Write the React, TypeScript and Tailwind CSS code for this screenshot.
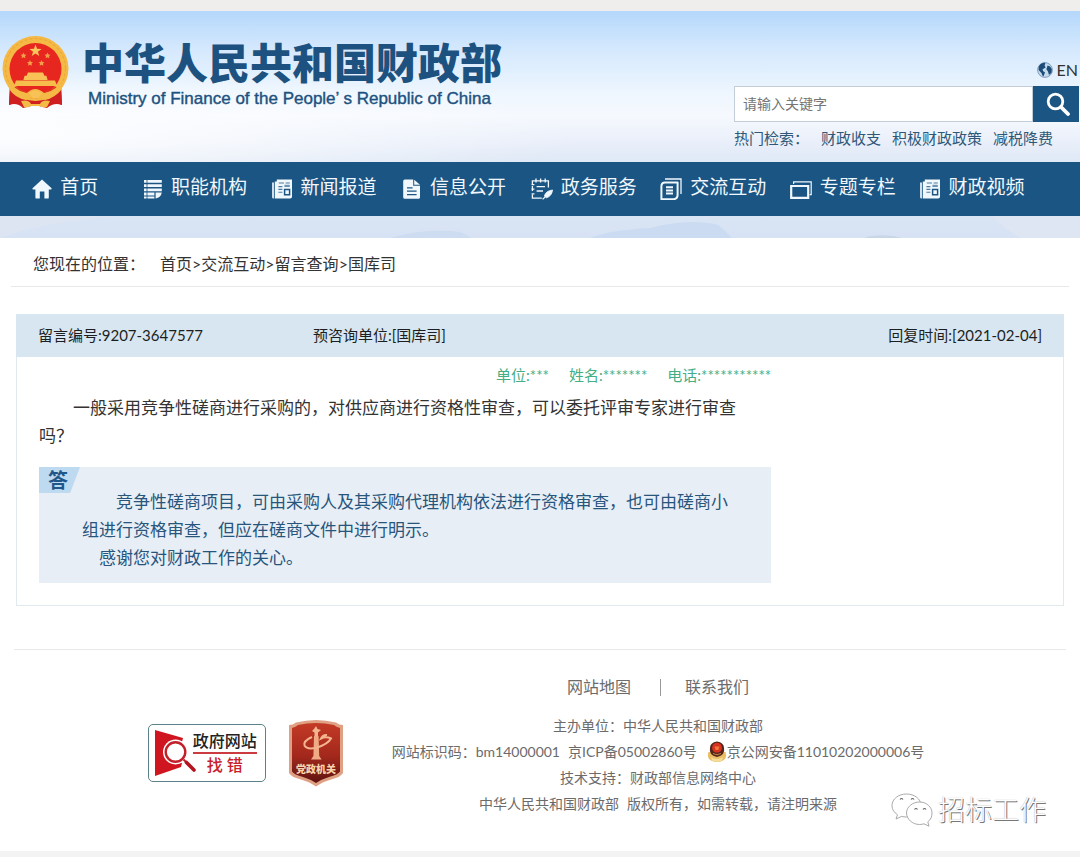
import React from "react";

const HomeIcon = () => (
  <svg viewBox="0 0 20 20" className="w-5 h-5 shrink-0" fill="currentColor" aria-hidden="true">
    <path d="M10 0.5 L19.6 9.3 Q20 10.6 18.6 10.6 L16.8 10.6 L16.8 18.4 Q16.8 19.6 15.6 19.6 L12.4 19.6 L12.4 12.6 L7.8 12.6 L7.8 19.6 L4.6 19.6 Q3.4 19.6 3.4 18.4 L3.4 10.6 L1.4 10.6 Q0 10.6 0.5 9.3 Z" />
  </svg>
);

const ListIcon = () => (
  <svg viewBox="0 0 20 20" className="w-5 h-5 shrink-0" fill="currentColor" aria-hidden="true">
    <path d="M1 1h2.6v2.8H1zM1 5.2h2.6V8H1zM1 9.400h2.600v2.800H1zM1 13.600h2.600v2.800H1zM1 17.600h2.600v2H1z" />
    <path d="M4.400 1H18.800v2.800H4.400zM4.400 5.200H18.800V8H4.400zM4.400 9.400H18.800v2.800H4.400zM4.400 13.600h7v2.800h-7zM4.400 17.600h7v2h-7z" />
    <path d="M12.600 13.400h6.200q-.8 4.800-6.200 6.200z" />
  </svg>
);

const NewsIcon = () => (
  <svg viewBox="0 0 20 20" className="w-5 h-5 shrink-0" aria-hidden="true">
    <path d="M0 3.4h2v16.200H1.600q-1.600 0-1.600-1.600z" fill="currentColor" opacity="0.85" />
    <path d="M2.8 2.6h2V0.6H20v17.2q0 1.8-1.8 1.8H2.8z" fill="currentColor" />
    <path
      d="M6.800 4h5.200M13.600 4h4.200M6.400 7.600h4M6.400 10.400h4M6.400 13.200h4"
      stroke="#4c7a9f"
      strokeWidth="1.1"
    />
    <path d="M12.6 10.4h5v5.400h-5z" fill="none" stroke="#1b5583" strokeWidth="1.5" />
    <path d="M12.4 5.800h5.400v2.200h-5.400z" fill="#6d93b3" />
  </svg>
);

const FileIcon = () => (
  <svg viewBox="0 0 20 20" className="w-5 h-5 shrink-0" aria-hidden="true">
    <path
      d="M2.8 0.6h8.4v6.2H18v11.4q0 1.6-1.6 1.6H2.8q-1.6 0-1.6-1.6V2.2q0-1.6 1.6-1.6z"
      fill="currentColor"
    />
    <path d="M12.2 0.8 L18 5.8 H12.200z" fill="currentColor" />
    <path d="M5 8.8h5.6M5 12.2h9.6M5 15.6h9.6" stroke="#1b5583" strokeWidth="1.2" />
  </svg>
);

const NoteIcon = () => (
  <svg
    viewBox="0 0 22 22"
    className="w-[22px] h-[22px] shrink-0"
    fill="none"
    stroke="currentColor"
    strokeWidth="1.3"
    aria-hidden="true"
  >
    <path d="M17.400 9.600V2.800H1.400v3.600M1.400 16.400v3.800h9.400M1.400 8v5" />
    <path d="M0.600 6.600h2.800M0.600 11.200h2.800M0.600 15.800h2.800" />
    <path d="M5 0.600v4M9.600 0.600v4M14.200 0.600v4M5.600 8.600h8.400M5.600 13h6.400" />
    <path d="M21.600 12q-7 .8-8.200 6l2 1.800q5.200-1.400 6.200-7.800z" fill="currentColor" strokeWidth="0.8" />
    <path d="M16 17l-4.400 4.400" />
  </svg>
);

const PagesIcon = () => (
  <svg
    viewBox="0 0 22 22"
    className="w-[22px] h-[22px] shrink-0"
    fill="none"
    stroke="currentColor"
    aria-hidden="true"
  >
    <path d="M5 1h16v15" strokeWidth="1.3" />
    <path
      d="M5 4.400h12.600v12.400q0 4.400-4.400 4.400H1.400V8.400q0-4 3.600-4z"
      strokeWidth="2"
      strokeLinejoin="round"
    />
    <path d="M6 9.200h7M6 12.400h7M6 15.600h7" strokeWidth="2" />
  </svg>
);

const WindowsIcon = () => (
  <svg
    viewBox="0 0 22 22"
    className="w-[22px] h-[22px] shrink-0"
    fill="none"
    stroke="currentColor"
    aria-hidden="true"
  >
    <path d="M3.600 6V3.800h17.600v12.800h-1.600" strokeWidth="1.2" />
    <path d="M1.200 8h17v11.800h-17z" strokeWidth="2.200" />
  </svg>
);

const Emblem = () => (
  <svg viewBox="0 0 68 74" className="w-[68px] h-[74px] shrink-0" role="img" aria-label="国徽">
    <path d="M9 48 L8 70 Q16 67 22 73 L34 70 L46 73 Q53 67 61 70 L60 48z" fill="#cf1f20" />
    <ellipse cx="34.500" cy="33.500" rx="33" ry="32.500" fill="#f5b945" />
    <ellipse cx="34.500" cy="33.500" rx="30" ry="30" fill="none" stroke="#eda93a" strokeWidth="1.200" strokeDasharray="3 2" />
    <path d="M9 53q4 5 12 8l-2 8q-5-2-11 1zM60 53q-4 5-12 8l2 8q5-2 11 1z" fill="#cf1f20" />
    <circle cx="34.500" cy="34" r="26" fill="#e6261f" />
    <path
      d="M34.5 9.4l1.5 4.4 4.6.1-3.7 2.8 1.4 4.4-3.8-2.6-3.8 2.6 1.4-4.4-3.7-2.8 4.6-.1z"
      fill="#fbc75c"
    />
    <g fill="#f4a04a">
      <path d="M22.500 17.500l.9 2 2.100.2-1.500 1.400.4 2.200-1.900-1.100-1.900 1.100.4-2.200-1.500-1.400 2.100-.2z" />
      <path d="M46.500 17.500l.9 2 2.100.2-1.500 1.400.4 2.200-1.900-1.100-1.900 1.100.4-2.200-1.500-1.400 2.100-.2z" />
      <path d="M29 25l.9 2 2.100.2-1.500 1.400.4 2.200-1.900-1.100-1.900 1.100.4-2.200-1.500-1.400 2.100-.2z" />
      <path d="M40.500 25l.9 2 2.100.2-1.500 1.400.4 2.200-1.900-1.100-1.900 1.100.4-2.200-1.500-1.400 2.100-.2z" />
    </g>
    <path d="M27 37.500h15l1.400 3.200h2L46.600 45H22.400l1.200-4.300h2z" fill="#f8c256" />
    <path d="M15 45.600h39l2 5.400H13z" fill="#f6bd4d" />
    <path
      d="M9 46q6 9 17 12 8-8 17 0 11-3 17-12l1 8q-7 9-17 11-9-6-19 0-11-2-17-11z"
      fill="#f5b945"
    />
    <path d="M14 52q5 4 11 5M55 52q-5 4-11 5" fill="none" stroke="#df3a22" strokeWidth="1.600" />
    <path d="M20 66q8-2 10 3h9q2-5 10-3l-3 6q-5 1-7-1h-9q-2 2-7 1z" fill="#f5b945" />
    <path d="M28 58q6.500-5 13 0l-4 5h-5z" fill="#f8c256" />
  </svg>
);

const GlobeIcon = () => (
  <svg viewBox="0 0 16 16" className="w-4 h-4" aria-hidden="true">
    <circle cx="8" cy="8" r="7.4" fill="#c3d9ec" stroke="#6c8cab" strokeWidth="0.8" />
    <path d="M3 2.600q3-2.600 5.400-1.600l-.8 2.400 1 2-3 1.800.4 1.800 2 1.400-1.600 4.200q-1.400-.8-1.800-3.400L1.600 8Q1.200 4.600 3 2.600z" fill="#1d4c78" />
    <path d="M10.600 3.600q2.800.2 4.200 3.400l-.2 3.400-2.600 2.600-1-3.400-1.600-2.400z" fill="#1d4c78" />
  </svg>
);

const SearchIcon = () => (
  <svg viewBox="0 0 24 24" className="w-6 h-6" fill="none" stroke="currentColor" aria-hidden="true">
    <circle cx="9.500" cy="9.500" r="7.300" strokeWidth="2.800" />
    <path d="M15 15l7 7" strokeWidth="3.800" strokeLinecap="round" />
  </svg>
);

const Hills = () => (
  <svg viewBox="0 0 1080 22" preserveAspectRatio="none" className="block w-full h-[22px]" aria-hidden="true">
    <path d="M0 22Q40 6 120 0H0v22z" fill="#dde5f3" />
    <path d="M390 22q30-9 60-7 14 0 20 7z" fill="#cddcf0" />
    <path d="M590 22q20-8 60-10 40-10 68-3 8 6 14 13z" fill="#cbdcf2" />
    <path d="M864 22q10-4 30-2l8 2z" fill="#c8d6e8" />
    <path d="M992 0q14 14 30 22h58V0z" fill="#dfe6f3" />
  </svg>
);

const FindErrorMark = () => (
  <svg viewBox="0 0 44 50" className="w-11 h-[50px] shrink-0" aria-hidden="true">
    <path d="M2 2l28 8-1 4L19 30l10 5-1 4L2 48z" fill="#cf1620" />
    <circle cx="22.500" cy="24" r="12.500" fill="#fff" />
    <circle cx="22.500" cy="24" r="9.800" fill="#fff" stroke="#c2202a" strokeWidth="2.400" />
    <path d="M30.500 31.500l3 3" stroke="#c2202a" strokeWidth="2" />
    <path d="M33.500 34.500l7.500 7.500" stroke="#b5141e" strokeWidth="3.600" strokeLinecap="round" />
  </svg>
);

const PartyBadge = () => (
  <svg viewBox="0 0 56 67" className="w-14 h-[67px]" role="img" aria-label="党政机关">
    <defs>
      <linearGradient id="shield" x1="0" y1="0" x2="0" y2="1">
        <stop offset="0" stopColor="#c33a26" />
        <stop offset="0.550" stopColor="#a3281c" />
        <stop offset="1" stopColor="#5f1310" />
      </linearGradient>
    </defs>
    <path d="M1 5Q5 5 8 2.500 18 0 28 0 38 0 48 2.500 51 5 55 5V53Q52 57.500 43 59.500 34 62 28 66.500 22 62 13 59.500 4 57.500 1 53z" fill="#dfa083" />
    <path d="M4 8Q8 7 10 5 19 3 28 3 37 3 46 5 48 7 52 8V51.500Q50 54.500 41 57 33 59.500 28 63 23 59.500 15 57 6 54.500 4 51.500z" fill="url(#shield)" />
    <path d="M26 9l2-3 1.500 3 3.500 1-3 2.500V16h-3.500v-3.500L24 11z" fill="#f3b48f" />
    <path d="M26 16h4.600l.6 20 2.400 3.600H23l2.400-3.600z" fill="#f0aa84" />
    <path d="M24 17q-9 4-7.500 8.500Q19 30 29 27.500 40 24 43 18.500 38 16 33 18.500q2-4 6-3.500" fill="none" stroke="#f3b48f" strokeWidth="2" />
    <text
      x="28"
      y="53"
      textAnchor="middle"
      className="text-[10px] font-black font-['Noto_Sans_CJK_SC',sans-serif]"
      fill="#f8d3ac"
    >
      党政机关
    </text>
  </svg>
);

const PoliceBadge = () => (
  <svg viewBox="0 0 20 22" className="inline-block w-5 h-[22px]" aria-hidden="true">
    <path d="M1.500 11q-2 6 2.500 8.500 6 3 12 0 4.500-2.500 2.500-8.500z" fill="#e9bd63" />
    <path d="M4 16q6 4 12 0l-1 3.500q-5 2.500-10 0z" fill="#f4dc9a" />
    <path d="M3 7q0-5.500 7-6.500 7 1 7 6.500 1.500 7-7 9-8.500-2-7-9z" fill="#53251c" />
    <ellipse cx="10" cy="6.800" rx="4.900" ry="5" fill="#d8321f" />
    <path d="M7.600 5.500h4.800l-1 3.500H8.600z" fill="#f0763a" />
    <path d="M6 12.500q4 2.500 8 0" fill="none" stroke="#c98743" />
  </svg>
);

const WechatMark = () => (
  <svg viewBox="0 0 42 34" className="w-[42px] h-[34px]" fill="#fff" stroke="#a0a0a0" strokeWidth="0.900" aria-hidden="true">
    <path d="M15.500 1C7.500 1 1 6 1 12.500c0 4 2 7 5.500 9.200L5 26l5.500-2.600q2.500.6 5 .6C23.500 24 30 19 30 12.500S23.500 1 15.500 1z" />
    <path d="M28.500 9C21.500 9 15.500 14 15.500 20s6 11.500 13 11.500q2.400 0 4.500-.7l5 2.400-1.200-4.400C40 26.600 41 23.500 41 20c0-6-5.500-11-12.500-11z" />
    <path d="M9 6.500q1.500-2 3 0M20 6.500q1.500-2 3 0M23.500 16.500q1.500-2 3 0M32 16.500q1.500-2 3 0" stroke="#666" strokeWidth="1.200" />
  </svg>
);

const navItems = [
  { label: "首页", icon: <HomeIcon /> },
  { label: "职能机构", icon: <ListIcon /> },
  { label: "新闻报道", icon: <NewsIcon /> },
  { label: "信息公开", icon: <FileIcon /> },
  { label: "政务服务", icon: <NoteIcon /> },
  { label: "交流互动", icon: <PagesIcon /> },
  { label: "专题专栏", icon: <WindowsIcon /> },
  { label: "财政视频", icon: <NewsIcon /> },
];

const hotWords = ["财政收支", "积极财政政策", "减税降费"];

const crumbs = ["首页", "交流互动", "留言查询", "国库司"];

const Header = () => {
  return (
    <header className="bg-[radial-gradient(ellipse_at_0%_55%,rgba(255,255,255,0.9)_0%,rgba(255,255,255,0)_38%),linear-gradient(to_bottom,#b4d7fb_0%,#d3e8fd_16%,#eef6fe_36%,#f6f9fe_46%,#e9effa_58%,#dde7f5_68%,#d7e3f4_100%)]">
      <div className="flex items-start justify-between min-h-[151px] pl-px pr-px">
        <div className="flex items-start gap-[13px] pt-6">
          <Emblem />
          <div className="text-[#1d5280]">
            <h1 className="text-[42px] leading-[56px] font-black whitespace-nowrap">
              中华人民共和国财政部
            </h1>
            <p className="pl-[6px] text-[17px] leading-[16px] font-['Liberation_Sans',sans-serif] [-webkit-text-stroke:0.4px_#1d5280] whitespace-nowrap">
              Ministry of Finance of the People’ s Republic of China
            </p>
          </div>
        </div>
        <div className="w-[345px] pt-[49px]">
          <div className="flex justify-end pr-px">
            <a href="#" className="flex items-center gap-1 text-base leading-5 text-[#333]">
              <GlobeIcon />
              EN
            </a>
          </div>
          <form className="flex h-9 mt-[6px]" onSubmit={(e) => e.preventDefault()}>
            <input
              type="text"
              aria-label="请输入关键字"
              placeholder="请输入关键字"
              className="flex-1 min-w-0 px-2 bg-white border border-[#c3cdd8] text-sm text-gray-700 placeholder:text-[#757575] outline-none"
            />
            <button
              type="submit"
              aria-label="搜索"
              className="flex items-center justify-center w-[46px] pl-1 bg-[#1b5583] text-white"
            >
              <SearchIcon />
            </button>
          </form>
          <div className="flex mt-[6px] text-[15px] leading-5 text-[#2f5878] whitespace-nowrap">
            <span className="mr-3">热门检索：</span>
            <div className="flex gap-[11px]">
              {hotWords.map((word) => (
                <a key={word} href="#">
                  {word}
                </a>
              ))}
            </div>
          </div>
        </div>
      </div>
      <nav className="bg-[#1b5583]">
        <ul className="flex h-[54px]">
          {navItems.map((item) => (
            <li key={item.label} className="w-[12%]">
              <a
                href="#"
                className="flex items-center justify-center h-full gap-2 pl-px text-[19px] text-[#f1f8fd] whitespace-nowrap"
              >
                {item.icon}
                <span className="pb-[3px]">{item.label}</span>
              </a>
            </li>
          ))}
        </ul>
      </nav>
      <Hills />
    </header>
  );
};

const Message = () => {
  return (
    <section className="mx-4 mt-[27px] border border-[#e0e9ed]">
      <div className="flex px-[22px] -mx-px -mt-px bg-[#d7e6f1] text-[15px] leading-[43px] text-[#1c1f22]">
        <span className="w-[275px]">留言编号:9207-3647577</span>
        <span className="flex-1">预咨询单位:[国库司]</span>
        <span>回复时间:[2021-02-04]</span>
      </div>
      <div className="w-[70%] ml-[22px] pb-[22px]">
        <div className="flex justify-end gap-5 pt-[7px] text-[15px] leading-[22px] text-[#44ae85]">
          <span>单位:***</span>
          <span>姓名:*******</span>
          <span>电话:***********</span>
        </div>
        <p className="pt-2 pr-6 indent-[34px] text-[17px] leading-7 text-[#333]">
          一般采用竞争性磋商进行采购的，对供应商进行资格性审查，可以委托评审专家进行审查吗？
        </p>
        <div className="relative mt-[17px] pt-[21px] pb-[11px] pl-[43px] pr-8 bg-[#e8eef6] text-[17px] leading-7 text-[#27557c]">
          <span className="absolute top-0 left-0 w-[41px] h-[26px] pl-[9px] bg-[#bddaf0] text-xl leading-[26px] font-bold text-[#1f578a] [clip-path:polygon(0_0,100%_0,76%_100%,0_100%)]">
            答
          </span>
          <p className="indent-[34px]">
            竞争性磋商项目，可由采购人及其采购代理机构依法进行资格审查，也可由磋商小组进行资格审查，但应在磋商文件中进行明示。
          </p>
          <p className="indent-[17px]">感谢您对财政工作的关心。</p>
        </div>
      </div>
    </section>
  );
};

const Footer = () => {
  return (
    <footer className="relative mx-[14px] mt-[43px] pt-[27px] pb-[34px] border-t border-[#e8e8e8]">
      <div className="flex justify-center gap-12 pr-2">
        <div className="flex items-center gap-[22px] pt-3">
          <a
            href="#"
            className="flex items-center w-[118px] h-[58px] pl-1 border border-[#5b8288] rounded-[5px] bg-white"
          >
            <FindErrorMark />
            <span className="flex flex-col items-center -ml-1 text-base leading-[22px] font-medium whitespace-nowrap">
              <span className="border-b-2 border-[#cc3a42] text-[#222]">政府网站</span>
              <span className="text-[#c8202a]">找 错</span>
            </span>
          </a>
          <a href="#">
            <PartyBadge />
          </a>
        </div>
        <div className="text-center text-sm leading-[26px] text-[#6b6b6b] whitespace-nowrap">
          <div className="flex items-center justify-center mb-4 text-base leading-5">
            <a href="#">网站地图</a>
            <span className="w-px h-[17px] ml-[29px] mr-6 bg-[#999]" />
            <a href="#">联系我们</a>
          </div>
          <p>主办单位：中华人民共和国财政部</p>
          <p className="flex items-center justify-center">
            <span className="mr-2">网站标识码：bm14000001</span>
            <a href="#" className="mr-[10px]">
              京ICP备05002860号
            </a>
            <PoliceBadge />
            <a href="#">京公网安备11010202000006号</a>
          </p>
          <p>技术支持：财政部信息网络中心</p>
          <p className="flex justify-center gap-2">
            <span>中华人民共和国财政部</span>
            <span>版权所有，如需转载，请注明来源</span>
          </p>
        </div>
      </div>
      <div className="absolute right-5 bottom-[23px] flex items-center gap-[5px]">
        <WechatMark />
        <span className="text-[27px] leading-9 font-light text-white [text-shadow:1px_1px_0_#777,0_0_1px_#999]">
          招标工作
        </span>
      </div>
    </footer>
  );
};

const App = () => {
  return (
    <div className="bg-white font-['Lato','Noto_Sans_CJK_SC',sans-serif]">
      <div className="h-[11px] bg-[#efeeed]" />
      <Header />
      <main>
        <div className="flex gap-[22px] mx-[11px] px-[22px] pt-4 pb-3 border-b border-[#e8e8e8] text-base leading-5 text-[#333]">
          <span className="-mr-[7px]">您现在的位置：</span>
          <span>
            {crumbs.map((crumb, i) => (
              <React.Fragment key={crumb}>
                {i > 0 && ">"}
                <a href="#">{crumb}</a>
              </React.Fragment>
            ))}
          </span>
        </div>
        <Message />
      </main>
      <Footer />
      <div className="h-[6px] bg-[#f3f3f3]" />
    </div>
  );
};

export default App;
